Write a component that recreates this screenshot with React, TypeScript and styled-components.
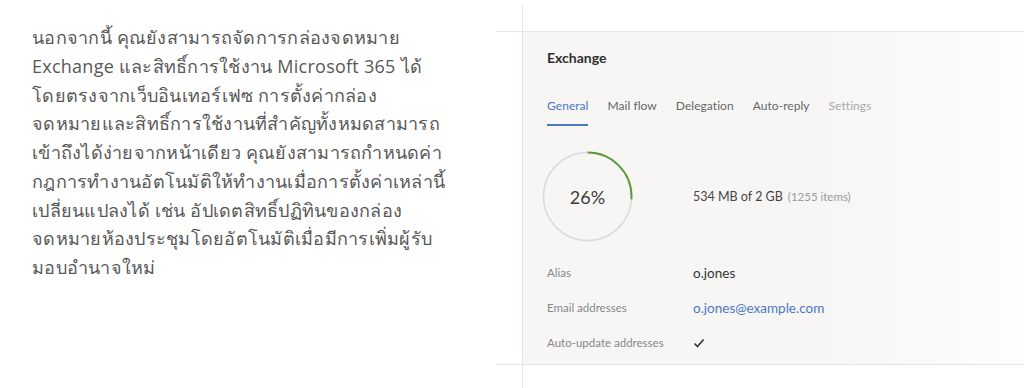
import React from 'react';
import styled, { createGlobalStyle } from 'styled-components';

const GlobalStyle = createGlobalStyle`
    body {
        margin: 0;
        background: #fff;
        font-family: "Open Sans", "Noto Sans", sans-serif;
    }
`;

const paragraphLines = [
    'นอกจากนี้ คุณยังสามารถจัดการกล่องจดหมาย',
    'Exchange และสิทธิ์การใช้งาน Microsoft 365 ได้',
    'โดยตรงจากเว็บอินเทอร์เฟซ การตั้งค่ากล่อง',
    'จดหมายและสิทธิ์การใช้งานที่สำคัญทั้งหมดสามารถ',
    'เข้าถึงได้ง่ายจากหน้าเดียว คุณยังสามารถกำหนดค่า',
    'กฎการทำงานอัตโนมัติให้ทำงานเมื่อการตั้งค่าเหล่านี้',
    'เปลี่ยนแปลงได้ เช่น อัปเดตสิทธิ์ปฏิทินของกล่อง',
    'จดหมายห้องประชุมโดยอัตโนมัติเมื่อมีการเพิ่มผู้รับ',
    'มอบอำนาจใหม่',
];

const tabs = [
    { label: 'General', state: 'active' },
    { label: 'Mail flow', state: 'normal' },
    { label: 'Delegation', state: 'normal' },
    { label: 'Auto-reply', state: 'normal' },
    { label: 'Settings', state: 'muted' },
];

const usedPercent = 26;

const Page = styled.main`
    display: flex;
    height: 388px;
    overflow: hidden;
`;

const TextColumn = styled.section`
    width: 496px;
    flex-shrink: 0;
    padding: 23px 0 0 32px;
    box-sizing: border-box;
`;

const Paragraph = styled.p`
    margin: 0;
    font-family: "Open Sans", "Noto Sans", sans-serif;
    font-size: 18px;
    letter-spacing: 0.25px;
    line-height: 28.75px;
    color: #585858;
    white-space: nowrap;
`;

const Stage = styled.section`
    flex: 1;
    display: grid;
    grid-template-columns: 26px 1fr;
    grid-template-rows: 25px auto 1fr;
    padding-top: 6px;
`;

const Rule = styled.div`
    grid-column: 2;
    grid-row: 1 / 4;
    border-left: 1px solid #e5e5e5;
`;

const Band = styled.div`
    grid-column: 1 / 3;
    grid-row: 2;
    padding-left: 27px;
    border-top: 1px solid #e5e5e5;
    border-bottom: 1px solid #e5e5e5;
`;

const Card = styled.div`
    display: flex;
    flex-direction: column;
    height: 332px;
    padding: 18px 24px 0 24px;
    box-sizing: border-box;
    background: linear-gradient(to right, #f7f6f5 0%, #f7f6f5 62%, #fdfdfd 100%);
    font-family: "Lato", "Open Sans", sans-serif;
`;

const Title = styled.h2`
    margin: 0;
    font-size: 14px;
    line-height: 16px;
    font-weight: 700;
    color: #2f2f2f;
`;

const TabBar = styled.nav`
    display: flex;
    gap: 19px;
    margin-top: 32px;
`;

const Tab = styled.span<{ $state: string }>`
    font-size: 12px;
    letter-spacing: 0.05px;
    line-height: 16px;
    padding-bottom: 10px;
    border-bottom: 2px solid ${p => (p.$state === 'active' ? '#4a78c2' : 'transparent')};
    color: ${p => (p.$state === 'active' ? '#4a78c2' : p.$state === 'muted' ? '#a8a8a8' : '#666')};
`;

const Storage = styled.div`
    display: flex;
    align-items: center;
    margin-top: 25px;
`;

const Gauge = styled.div`
    width: 91px;
    height: 91px;
    margin-left: -5px;
    display: grid;
    place-items: center;

    svg {
        grid-area: 1 / 1;
    }
`;

const GaugeValue = styled.span`
    grid-area: 1 / 1;
    font-size: 18px;
    color: #3d3d3d;
`;

const Usage = styled.div`
    margin-left: 60px;
    font-size: 12.5px;
    color: #444;
`;

const UsageNote = styled.span`
    margin-left: 5px;
    font-size: 11.5px;
    color: #9a9a9a;
`;

const Details = styled.dl`
    display: grid;
    grid-template-columns: 146px 1fr;
    grid-auto-rows: 35px;
    align-items: center;
    margin: 13px 0 0 0;
`;

const Label = styled.dt`
    font-size: 11.5px;
    color: #888;
`;

const Value = styled.dd<{ $link?: boolean }>`
    margin: 0;
    font-size: 13.5px;
    color: ${p => (p.$link ? '#4a78c2' : '#333')};
`;

const GaugeRing = ({ percent }: { percent: number }) => {
    const r = 44;
    const c = 2 * Math.PI * r;
    return (
        <svg width="91" height="91" viewBox="0 0 91 91">
            <circle cx="45.5" cy="45.5" r={r} fill="none" stroke="#dcdcdc" strokeWidth="1.5" />
            <circle
                cx="45.5"
                cy="45.5"
                r={r}
                fill="none"
                stroke="#5d9d3f"
                strokeWidth="2"
                strokeDasharray={`${(c * percent) / 100} ${c}`}
                transform="rotate(-90 45.5 45.5)"
            />
        </svg>
    );
};

const CheckMark = () => (
    <svg width="12" height="10" viewBox="0 0 12 10">
        <polyline points="1.5,5.5 4.5,8.5 10.5,1.5" fill="none" stroke="#333" strokeWidth="1.6" />
    </svg>
);

const App = () => {
    return (
        <Page>
            <GlobalStyle />
            <TextColumn>
                <Paragraph>
                    {paragraphLines.map((line, i) => (
                        <React.Fragment key={i}>
                            {line}
                            {i < paragraphLines.length - 1 && <br />}
                        </React.Fragment>
                    ))}
                </Paragraph>
            </TextColumn>

            <Stage>
                <Rule />
                <Band>
                    <Card>
                        <Title>Exchange</Title>
                        <TabBar>
                            {tabs.map(tab => (
                                <Tab key={tab.label} $state={tab.state}>
                                    {tab.label}
                                </Tab>
                            ))}
                        </TabBar>

                        <Storage>
                            <Gauge>
                                <GaugeRing percent={usedPercent} />
                                <GaugeValue>{usedPercent}%</GaugeValue>
                            </Gauge>
                            <Usage>
                                534 MB of 2 GB
                                <UsageNote>(1255 items)</UsageNote>
                            </Usage>
                        </Storage>

                        <Details>
                            <Label>Alias</Label>
                            <Value>o.jones</Value>
                            <Label>Email addresses</Label>
                            <Value $link>o.jones@example.com</Value>
                            <Label>Auto-update addresses</Label>
                            <Value>
                                <CheckMark />
                            </Value>
                        </Details>
                    </Card>
                </Band>
            </Stage>
        </Page>
    );
};

export default App;
